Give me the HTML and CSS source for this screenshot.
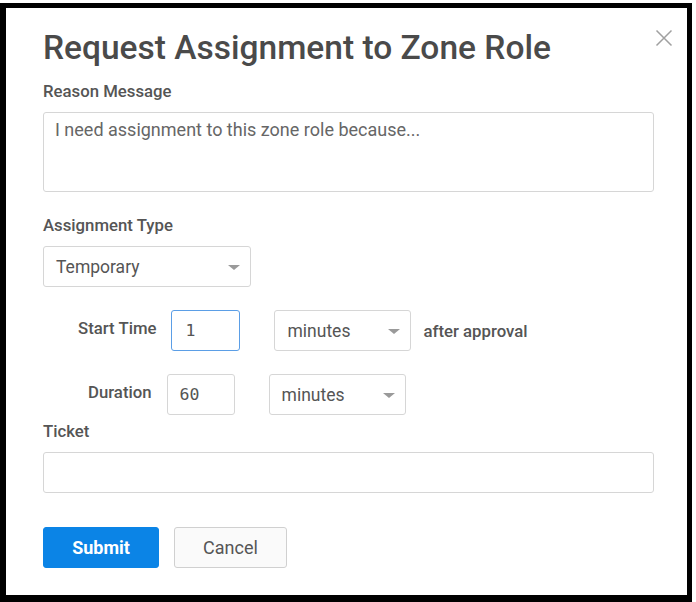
FILE: index.html
```html
<!DOCTYPE html>
<html>
<head>
<meta charset="utf-8">
<link rel="stylesheet" href="styles.css">
</head>
<body>
<div class="frame">
  <div class="dialog">
    <button class="close" aria-label="Close">
      <svg width="18" height="18" viewBox="0 0 18 18"><path d="M1.5 1.5L16.5 16.5M16.5 1.5L1.5 16.5" stroke="#a0a0a0" stroke-width="1.5" fill="none"/></svg>
    </button>
    <h1 class="title">Request Assignment to Zone Role</h1>
    <div class="label label-first">Reason Message</div>
    <div class="textarea"><span class="placeholder">I need assignment to this zone role because...</span></div>
    <div class="label label-gap">Assignment Type</div>
    <div class="select select-type"><span>Temporary</span><span class="caret"></span></div>
    <div class="row row-start">
      <span class="row-label">Start Time</span>
      <div class="num num-focus">1</div>
      <div class="select select-unit"><span>minutes</span><span class="caret"></span></div>
      <span class="after">after approval</span>
    </div>
    <div class="row row-dur">
      <span class="row-label">Duration</span>
      <div class="num">60</div>
      <div class="select select-unit"><span>minutes</span><span class="caret"></span></div>
    </div>
    <div class="label label-ticket">Ticket</div>
    <div class="input"></div>
    <div class="buttons">
      <button class="btn btn-primary">Submit</button>
      <button class="btn btn-default">Cancel</button>
    </div>
  </div>
</div>
</body>
</html>
```
FILE: styles.css
```css
html, body {
  margin: 0;
  padding: 0;
  background: #ffffff;
}
body {
  width: 696px;
  height: 602px;
  overflow: hidden;
  font-family: Roboto, "Liberation Sans", sans-serif;
}
.frame {
  margin-top: 3px;
  width: 681px;
  height: 587px;
  border-style: solid;
  border-color: #000;
  border-width: 5px 5px 7px 6px;
  background: #fff;
}
.dialog {
  position: relative;
  padding: 0 33px 0 37px;
}
.close {
  position: absolute;
  right: 14px;
  top: 21px;
  padding: 0;
  border: 0;
  background: none;
  width: 18px;
  height: 18px;
}
.close svg { display: block; }
.title {
  margin: 0;
  padding-top: 20px;
  height: 48px;
  font-size: 33.5px;
  line-height: 40px;
  font-weight: 500;
  color: #4a4a4a;
  white-space: nowrap;
}
.label {
  height: 20px;
  line-height: 20px;
  font-size: 16.75px;
  font-weight: 500;
  color: #555;
  margin-bottom: 11px;
}
.label-first { margin-top: 5px; }
.label-gap { margin-top: 23px; }
.label-ticket { margin-top: 6px; }
.textarea {
  box-sizing: border-box;
  height: 80px;
  border: 1px solid #d6d6d6;
  border-radius: 3px;
  padding: 6px 11px;
  font-size: 18px;
  line-height: 22px;
  color: #666;
}
.select {
  box-sizing: border-box;
  height: 41px;
  border: 1px solid #d6d6d6;
  border-radius: 3px;
  display: flex;
  align-items: center;
  justify-content: space-between;
  padding: 0 10px 0 12px;
  font-size: 17.5px;
  color: #555;
  background: #fff;
}
.select-type { width: 208px; }
.select-unit { width: 137px; margin-left: 34px; }
.caret {
  width: 0;
  height: 0;
  border-left: 6px solid transparent;
  border-right: 6px solid transparent;
  border-top: 5px solid #9a9a9a;
  margin-top: 2px;
}
.row {
  display: flex;
  align-items: center;
  height: 41px;
  margin-top: 23px;
}
.row-start { padding-left: 35px; }
.row-dur { padding-left: 45px; }
.row-label {
  font-size: 16.75px;
  font-weight: 500;
  color: #555;
  margin-right: 15px;
  margin-top: -5px;
}
.num {
  box-sizing: border-box;
  width: 69px;
  height: 41px;
  border: 1px solid #d6d6d6;
  border-radius: 3px;
  padding: 0 12px;
  display: flex;
  align-items: center;
  font-family: "DejaVu Sans Mono", monospace;
  font-size: 16.5px;
  color: #555;
}
.row-dur .num { width: 68px; }
.num-focus { border-color: #5b9ee6; padding-left: 13px; }
.after {
  margin-left: 12px;
  font-size: 16.75px;
  font-weight: 500;
  color: #555;
}
.input {
  box-sizing: border-box;
  height: 41px;
  border: 1px solid #d6d6d6;
  border-radius: 3px;
}
.buttons {
  display: flex;
  gap: 15px;
  margin-top: 34px;
}
.btn {
  box-sizing: border-box;
  height: 41px;
  border-radius: 3px;
  font-family: Roboto, "Liberation Sans", sans-serif;
  font-size: 18px;
  padding: 0;
}
.btn-primary {
  width: 116px;
  background: #0b84e6;
  border: 1px solid #0b84e6;
  color: #fff;
  font-weight: 700;
}
.btn-default {
  width: 113px;
  background: #fafafa;
  border: 1px solid #d0d0d0;
  color: #555;
}
```
